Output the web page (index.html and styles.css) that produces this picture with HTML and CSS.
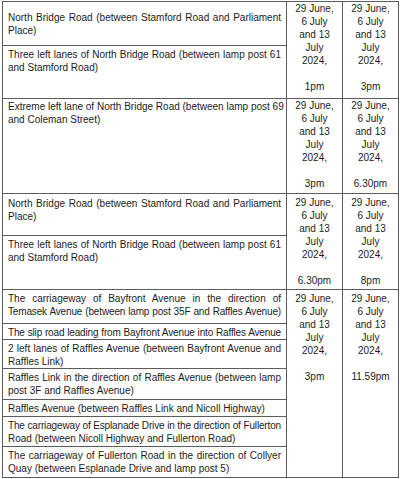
FILE: index.html
```html
<!DOCTYPE html>
<html lang="en">
<head>
<meta charset="utf-8">
<title>Road closures</title>
<link rel="stylesheet" href="styles.css">
</head>
<body>
<table class="closures">
  <colgroup>
    <col class="col-road">
    <col class="col-start">
    <col class="col-end">
  </colgroup>
  <tbody>
    <tr class="h-g1a">
      <td class="road mid"><span class="ln j">North Bridge Road (between Stamford Road and Parliament</span><span class="ln">Place)</span></td>
      <td class="date" rowspan="2">29 June,<br>6 July<br>and 13<br>July<br>2024,<br><br>1pm</td>
      <td class="date" rowspan="2">29 June,<br>6 July<br>and 13<br>July<br>2024,<br><br>3pm</td>
    </tr>
    <tr class="h-g1b">
      <td class="road"><span class="ln j">Three left lanes of North Bridge Road (between lamp post 61</span><span class="ln">and Stamford Road)</span></td>
    </tr>
    <tr class="h-g2">
      <td class="road top0"><span class="ln">Extreme left lane of North Bridge Road (between lamp post 69</span><span class="ln">and Coleman Street)</span></td>
      <td class="date">29 June,<br>6 July<br>and 13<br>July<br>2024,<br><br>3pm</td>
      <td class="date">29 June,<br>6 July<br>and 13<br>July<br>2024,<br><br>6.30pm</td>
    </tr>
    <tr class="h-g3a">
      <td class="road g3a"><span class="ln j">North Bridge Road (between Stamford Road and Parliament</span><span class="ln">Place)</span></td>
      <td class="date d3" rowspan="2">29 June,<br>6 July<br>and 13<br>July<br>2024,<br><br>6.30pm</td>
      <td class="date d3" rowspan="2">29 June,<br>6 July<br>and 13<br>July<br>2024,<br><br>8pm</td>
    </tr>
    <tr class="h-g3b">
      <td class="road"><span class="ln j">Three left lanes of North Bridge Road (between lamp post 61</span><span class="ln">and Stamford Road)</span></td>
    </tr>
    <tr class="h-g4a">
      <td class="road"><span class="ln j">The carriageway of Bayfront Avenue in the direction of</span><span class="ln j c">Temasek Avenue (between lamp post 35F and Raffles Avenue)</span></td>
      <td class="date d3" rowspan="7">29 June,<br>6 July<br>and 13<br>July<br>2024,<br><br>3pm</td>
      <td class="date d3" rowspan="7">29 June,<br>6 July<br>and 13<br>July<br>2024,<br><br>11.59pm</td>
    </tr>
    <tr class="h-g4b">
      <td class="road"><span class="ln j c">The slip road leading from Bayfront Avenue into Raffles Avenue</span></td>
    </tr>
    <tr class="h-g4c">
      <td class="road"><span class="ln j">2 left lanes of Raffles Avenue (between Bayfront Avenue and</span><span class="ln">Raffles Link)</span></td>
    </tr>
    <tr class="h-g4d">
      <td class="road"><span class="ln j">Raffles Link in the direction of Raffles Avenue (between lamp</span><span class="ln">post 3F and Raffles Avenue)</span></td>
    </tr>
    <tr class="h-g4e">
      <td class="road"><span class="ln">Raffles Avenue (between Raffles Link and Nicoll Highway)</span></td>
    </tr>
    <tr class="h-g4f">
      <td class="road"><span class="ln j c">The carriageway of Esplanade Drive in the direction of Fullerton</span><span class="ln">Road (between Nicoll Highway and Fullerton Road)</span></td>
    </tr>
    <tr class="h-g4g">
      <td class="road"><span class="ln j">The carriageway of Fullerton Road in the direction of Collyer</span><span class="ln">Quay (between Esplanade Drive and lamp post 5)</span></td>
    </tr>
  </tbody>
</table>
</body>
</html>
```

FILE: styles.css
```css
html, body {
  margin: 0;
  padding: 0;
  background: #ffffff;
}

body {
  font-family: "Liberation Sans", Arial, sans-serif;
  font-size: 10px;
  line-height: 13px;
  color: #1c1c1c;
}

.closures {
  border-collapse: collapse;
  table-layout: fixed;
  width: 396px;
  margin: 1px 0 0 2px;
  border: 1px solid #4a4a4a;
}

.col-road { width: 284px; }
.col-start { width: 56px; }
.col-end { width: 56px; }

.closures td {
  border: 1px solid #5c5c5c;
  padding: 0;
  vertical-align: top;
}

.closures td.road {
  padding: 2px 5px 0 5px;
}

.closures td.mid {
  vertical-align: middle;
  padding-top: 0;
}

.closures td.top0 {
  padding-top: 1px;
}

.closures td.g3a {
  padding-top: 3px;
}

.ln {
  display: block;
  white-space: nowrap;
}

.j {
  text-align: justify;
  text-align-last: justify;
}

.c {
  letter-spacing: -0.15px;
}

.closures td.date {
  text-align: center;
  padding-top: 0;
}

.closures td.d3 {
  padding-top: 2px;
}

.h-g1a { height: 44px; }
.h-g1b { height: 53px; }
.h-g2 { height: 95px; }
.h-g3a { height: 42px; }
.h-g3b { height: 54px; }
.h-g4a { height: 34px; }
.h-g4b { height: 16px; }
.h-g4c { height: 29px; }
.h-g4d { height: 31px; }
.h-g4e { height: 17px; }
.h-g4f { height: 30px; }
.h-g4g { height: 31px; }
```
